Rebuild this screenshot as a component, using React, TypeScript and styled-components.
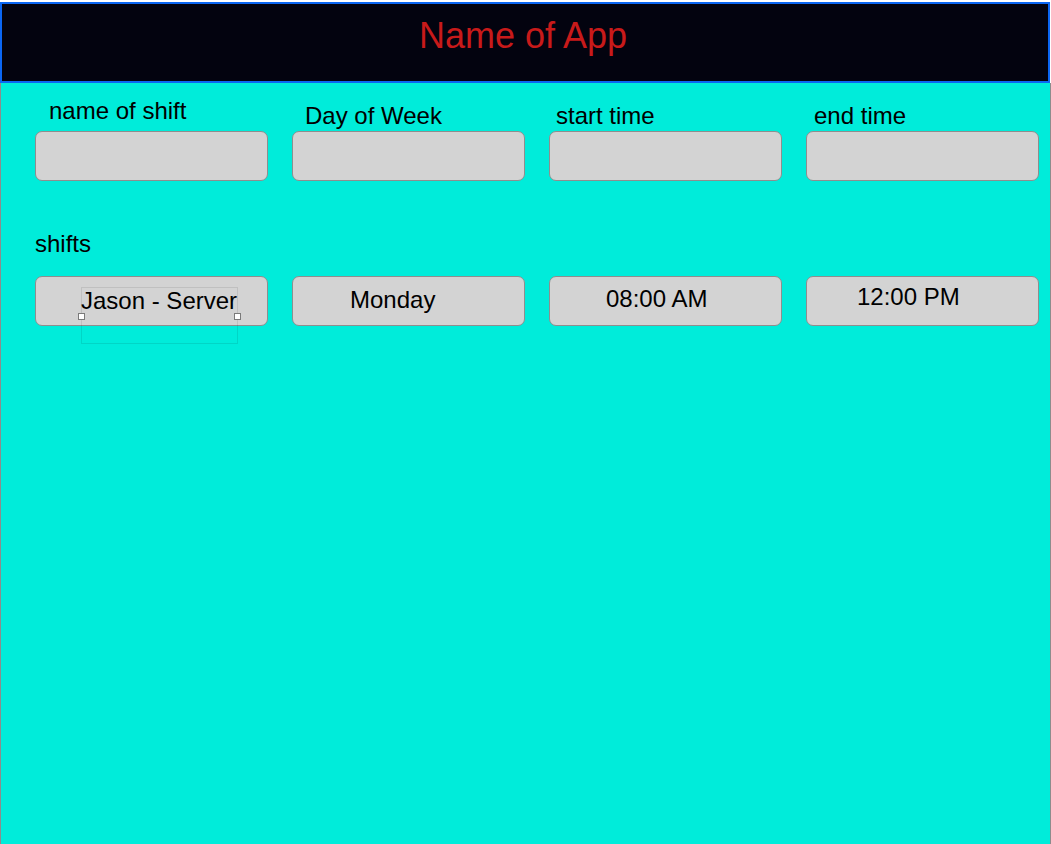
import React from "react";
import styled, { createGlobalStyle } from "styled-components";

const GlobalStyle = createGlobalStyle`
  html, body {
    margin: 0;
    padding: 0;
    background: #ffffff;
  }
  body {
    font-family: "Liberation Sans", Arial, Helvetica, sans-serif;
  }
`;

const Screen = styled.div`
  width: 1051px;
  height: 844px;
  padding-top: 2px;
  box-sizing: border-box;
  display: flex;
  flex-direction: column;
  overflow: hidden;
`;

const Header = styled.header`
  width: 1050px;
  height: 81px;
  box-sizing: border-box;
  border: 2px solid #0b66f2;
  background: #03030f;
  display: flex;
  justify-content: center;
  padding-top: 12px;
`;

const Title = styled.h1`
  margin: 0;
  font-size: 36px;
  line-height: 40px;
  font-weight: 400;
  color: #c81a1a;
  transform: translateX(-2px);
`;

const Body = styled.main`
  flex: 1;
  background: #00ecda;
  border-left: 1px solid #8c8c8c;
  border-right: 1px solid #8c8c8c;
  padding: 14px 0 0 34px;
  display: flex;
  flex-direction: column;
`;

const FieldRow = styled.div`
  display: grid;
  grid-template-columns: repeat(4, 233px);
  column-gap: 24px;
  align-items: end;
`;

const Field = styled.div`
  display: flex;
  flex-direction: column;
`;

const Label = styled.label<{ $indent: number; $lift?: number }>`
  display: block;
  font-size: 24px;
  line-height: 28px;
  color: #000;
  padding-left: ${(p) => p.$indent}px;
  margin-bottom: ${(p) => 1 + (p.$lift ?? 0)}px;
`;

const Box = styled.div<{ $indent?: number; $top?: number }>`
  height: 50px;
  box-sizing: border-box;
  background: #d3d3d3;
  border: 1px solid #8e8e8e;
  border-radius: 7px;
  display: flex;
  align-items: flex-start;
  padding-left: ${(p) => (p.$indent ?? 0) - 1}px;
  padding-top: ${(p) => p.$top ?? 0}px;
  font-size: 24px;
  line-height: 28px;
  color: #000;
  white-space: nowrap;
`;

const SectionTitle = styled.h2`
  margin: 49px 0 18px 0;
  font-size: 24px;
  line-height: 28px;
  font-weight: 400;
  color: #000;
`;

const SelectedText = styled.span`
  position: relative;
  display: inline-block;
`;

const SelectionFrame = styled.span`
  position: absolute;
  left: 0;
  top: 0;
  width: 157px;
  height: 57px;
  box-sizing: border-box;
  border: 1px solid rgba(0, 0, 0, 0.09);
  pointer-events: none;
`;

const Handle = styled.span<{ $side: "left" | "right" }>`
  position: absolute;
  top: 25px;
  ${(p) => (p.$side === "left" ? "left: -4px;" : "right: -4px;")}
  width: 7px;
  height: 7px;
  box-sizing: border-box;
  background: #ffffff;
  border: 1px solid #7a7a7a;
`;

const inputs = [
  { label: "name of shift", indent: 14, lift: 5 },
  { label: "Day of Week", indent: 13 },
  { label: "start time", indent: 7 },
  { label: "end time", indent: 8 },
];

export default function App() {
  return (
    <>
      <GlobalStyle />
      <Screen>
        <Header>
          <Title>Name of App</Title>
        </Header>
        <Body>
          <FieldRow>
            {inputs.map((f) => (
              <Field key={f.label}>
                <Label $indent={f.indent} $lift={f.lift}>
                  {f.label}
                </Label>
                <Box />
              </Field>
            ))}
          </FieldRow>

          <SectionTitle>shifts</SectionTitle>

          <FieldRow>
            <Box $indent={46} $top={10}>
              <SelectedText>
                Jason - Server
                <SelectionFrame>
                  <Handle $side="left" />
                  <Handle $side="right" />
                </SelectionFrame>
              </SelectedText>
            </Box>
            <Box $indent={58} $top={9}>
              Monday
            </Box>
            <Box $indent={57} $top={8}>
              08:00 AM
            </Box>
            <Box $indent={51} $top={6}>
              12:00 PM
            </Box>
          </FieldRow>
        </Body>
      </Screen>
    </>
  );
}
